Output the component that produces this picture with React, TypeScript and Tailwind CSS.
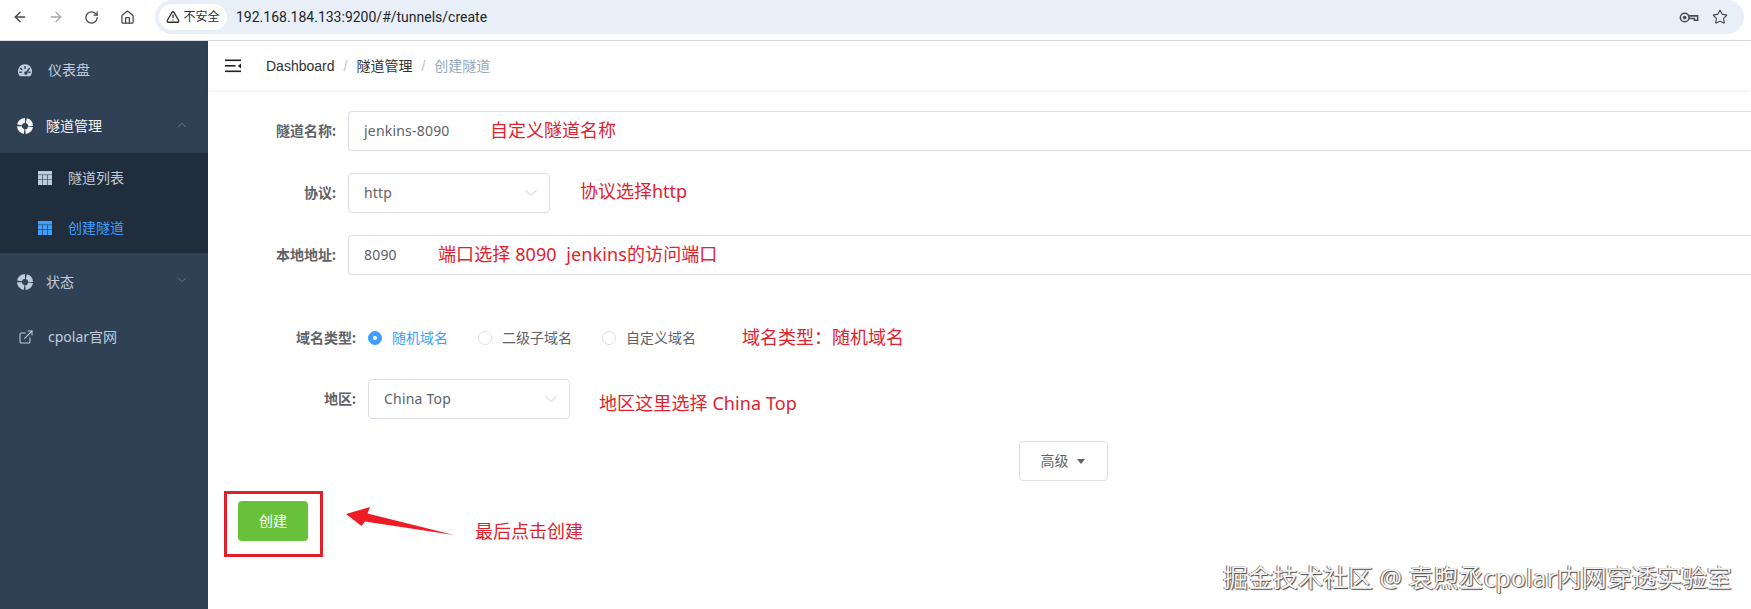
import React from "react";
import { ArrowLeft, ArrowRight, RotateCw, Home, TriangleAlert, Star, ChevronUp, ChevronDown, ExternalLink } from "lucide-react";

const cjk = "font-['Noto_Sans','Noto_Sans_CJK_SC',sans-serif]";
const note = "absolute whitespace-pre text-[18px] leading-[24px] text-[#e1222f] font-['Noto_Sans','Noto_Sans_CJK_SC',sans-serif]";

function Ring({ className }: { className: string }) {
  return (
    <svg viewBox="0 0 16 16" className={className} fill="none" stroke="currentColor">
      <circle cx="8" cy="8" r="5.6" strokeWidth="4.8" strokeDasharray="7.4 1.4" strokeDashoffset="-0.7" />
    </svg>
  );
}

function Grid({ className }: { className: string }) {
  return (
    <svg viewBox="0 0 14 14" className={className} fill="currentColor">
      <rect x="0" y="0" width="14" height="3.6" />
      <rect x="0" y="4.1" width="4.3" height="4.4" />
      <rect x="4.8" y="4.1" width="4.4" height="4.4" />
      <rect x="9.7" y="4.1" width="4.3" height="4.4" />
      <rect x="0" y="9" width="4.3" height="5" />
      <rect x="4.8" y="9" width="4.4" height="5" />
      <rect x="9.7" y="9" width="4.3" height="5" />
    </svg>
  );
}

function Gauge() {
  return (
    <svg viewBox="0 0 16 14" className="h-[13px] w-[14px] text-[#bfcbd9]" fill="currentColor">
      <path fillRule="evenodd" d="M8 0a8 8 0 0 1 6.6 12.6c-.3.4-.7.9-1.3.9H2.7c-.6 0-1-.5-1.3-.9A8 8 0 0 1 8 0Zm-.9 2v3h1.8V2H7.1ZM3.3 3.7 2.1 5l2 2 1.2-1.2-2-2.1Zm9.4 0-3.5 4.4a1.9 1.9 0 1 0 1.5 1L13.8 5l-1.1-1.3ZM1.5 8.2v1.7h2.8V8.2H1.5Zm10.2 0v1.7h2.8V8.2h-2.8Z" />
    </svg>
  );
}

function SelectBox({ value, width }: { value: string; width: string }) {
  return (
    <div className={`flex h-10 items-center justify-between rounded border border-[#dcdfe6] bg-white pl-[15px] pr-[8px] text-sm tracking-[0.2px] text-[#606266] ${width}`}>
      <span>{value}</span>
      <ChevronDown className="h-[20px] w-[20px] text-[#c0c4cc]" strokeWidth={1.1} />
    </div>
  );
}

function Radio({ label, on, width }: { label: string; on?: boolean; width: string }) {
  return (
    <div className={`flex items-center ${width}`}>
      <span className={`mr-[10px] flex h-[14px] w-[14px] items-center justify-center rounded-full border ${on ? "border-[#409eff] bg-[#409eff]" : "border-[#dcdfe6] bg-white"}`}>
        {on && <span className="h-1 w-1 rounded-full bg-white" />}
      </span>
      <span className={`text-sm leading-5 ${on ? "text-[#409eff]" : "text-[#606266]"}`}>{label}</span>
    </div>
  );
}

export default function App() {
  return (
    <div className={`relative flex h-[609px] w-[1751px] flex-col overflow-hidden bg-white ${cjk}`}>
      <div className="flex h-[41px] shrink-0 border-b border-[#d9dcdf] bg-white">
        <div className="flex h-[34px] w-[155px] shrink-0 items-center text-[#474747]">
          <ArrowLeft className="ml-[12px] h-4 w-4" strokeWidth={2} />
          <ArrowRight className="ml-[20px] h-4 w-4 text-[#a8a8a8]" strokeWidth={2} />
          <RotateCw className="ml-[20px] h-[15px] w-[15px]" strokeWidth={2} />
          <Home className="ml-[21px] h-[15px] w-[15px]" strokeWidth={2} />
        </div>
        <div className="flex h-[34px] w-[1589px] items-center rounded-r-[17px] rounded-l-[17px] bg-[#e9eff8] pl-[4px] pr-[16px]">
          <div className="flex h-[26px] w-[68px] items-center justify-center gap-[3px] rounded-full bg-white text-[12px] text-[#2e2e2e]">
            <TriangleAlert className="h-[14px] w-[14px]" strokeWidth={2.2} />
            <span>不安全</span>
          </div>
          <span className="ml-[9px] font-['Roboto',sans-serif] text-[14px] text-[#22262a]">192.168.184.133:9200/#/tunnels/create</span>
          <div className="ml-auto flex items-center gap-[13px] text-[#474c55]">
            <svg viewBox="0 0 18 12" className="h-[13px] w-[20px]" fill="none" stroke="currentColor" strokeWidth="1.4">
              <circle cx="5" cy="6" r="4" />
              <circle cx="5" cy="6" r="1" fill="currentColor" />
              <path d="M9 4.5h8v4h-3v-1.5h-5" />
            </svg>
            <Star className="h-[16px] w-[16px]" strokeWidth={1.7} />
          </div>
        </div>
      </div>

      <div className="flex min-h-0 flex-1">
        <aside className="w-[208px] shrink-0 bg-[#304156] text-sm text-[#bfcbd9]">
          <div className="flex h-[56px] items-center pl-[18px] pt-[2px]">
            <Gauge />
            <span className="ml-[16px]">仪表盘</span>
          </div>
          <div className="flex h-[56px] items-center pl-[17px] pr-[19px] pt-[2px] text-[#f4f4f5]">
            <Ring className="h-4 w-4" />
            <span className="ml-[13px]">隧道管理</span>
            <ChevronUp className="ml-auto mb-[2px] h-[14px] w-[14px] text-[#7f8c9d]" strokeWidth={1.2} />
          </div>
          <div className="bg-[#1f2d3d]">
            <div className="flex h-[50px] items-center pl-[38px]">
              <Grid className="h-[14px] w-[14px]" />
              <span className="ml-[16px]">隧道列表</span>
            </div>
            <div className="flex h-[50px] items-center pl-[38px] text-[#409eff]">
              <Grid className="h-[14px] w-[14px]" />
              <span className="ml-[16px]">创建隧道</span>
            </div>
          </div>
          <div className="flex h-[56px] items-center pl-[17px] pr-[19px] pt-[2px]">
            <Ring className="h-4 w-4" />
            <span className="ml-[13px]">状态</span>
            <ChevronDown className="ml-auto mb-[4px] h-[14px] w-[14px] text-[#7f8c9d]" strokeWidth={1.2} />
          </div>
          <div className="flex h-[56px] items-center pl-[18px]">
            <ExternalLink className="h-4 w-4" strokeWidth={1.6} />
            <span className="ml-[14px]">cpolar官网</span>
          </div>
        </aside>

        <main className="relative min-w-0 flex-1">
          <header className="flex h-[49px] items-center bg-white pl-[17px] shadow-[0_1px_4px_rgba(0,21,41,0.08)]">
            <svg viewBox="0 0 16 14" className="h-[14px] w-[16px] text-[#222]" fill="currentColor">
              <rect x="0" y="0.5" width="16" height="1.6" />
              <rect x="0" y="6" width="10.5" height="1.6" />
              <rect x="0" y="11.5" width="16" height="1.6" />
              <path d="M16 4.4v5l-3.2-2.5Z" />
            </svg>
            <nav className="ml-[25px] flex items-center text-sm font-['Liberation_Sans','Noto_Sans_CJK_SC',sans-serif] text-[#303133]">
              <span>Dashboard</span>
              <span className="mx-[9px] text-[#c0c4cc]">/</span>
              <span>隧道管理</span>
              <span className="mx-[9px] text-[#c0c4cc]">/</span>
              <span className="text-[#97a8be]">创建隧道</span>
            </nav>
          </header>

          <div className="pt-[21px]">
            <div className="flex items-center">
              <label className="mr-3 w-[128px] text-right text-sm font-bold text-[#606266]">隧道名称:</label>
              <div className="relative flex h-10 flex-1 items-center rounded-l border border-r-0 border-[#dcdfe6] pl-[15px] text-sm tracking-[0.2px] text-[#606266]">
                jenkins-8090
                <span className={`${note} left-[141px] top-[6px] tracking-normal`}>自定义隧道名称</span>
              </div>
            </div>

            <div className="mt-[22px] flex items-center">
              <label className="mr-3 w-[128px] text-right text-sm font-bold text-[#606266]">协议:</label>
              <SelectBox value="http" width="w-[202px]" />
              <span className="ml-[30px] mb-[4px] whitespace-pre text-[18px] leading-[24px] text-[#e1222f]">协议选择http</span>
            </div>

            <div className="mt-[22px] flex items-center">
              <label className="mr-3 w-[128px] text-right text-sm font-bold text-[#606266]">本地地址:</label>
              <div className="relative flex h-10 flex-1 items-center rounded-l border border-r-0 border-[#dcdfe6] pl-[15px] text-sm tracking-[0.2px] text-[#606266]">
                8090
                <span className={`${note} left-[89px] top-[6px] tracking-[0.1px]`}>端口选择 8090  jenkins的访问端口</span>
              </div>
            </div>

            <div className="mt-[43px] flex h-10 items-center">
              <label className="mr-3 w-[148px] text-right text-sm font-bold text-[#606266]">域名类型:</label>
              <Radio label="随机域名" on width="w-[110px]" />
              <Radio label="二级子域名" width="w-[124px]" />
              <Radio label="自定义域名" width="w-[124px]" />
              <span className="ml-[16px] mb-[3px] whitespace-pre text-[18px] leading-[24px] text-[#e1222f]">{"域名类型\uFF1A随机域名"}</span>
            </div>

            <div className="mt-[21px] flex items-center">
              <label className="mr-3 w-[148px] text-right text-sm font-bold text-[#606266]">地区:</label>
              <SelectBox value="China Top" width="w-[202px]" />
              <span className="ml-[29px] mt-[8px] whitespace-pre text-[18px] leading-[24px] tracking-[0.1px] text-[#e1222f]">地区这里选择 China Top</span>
            </div>

            <div className="ml-[811px] mt-[22px] flex h-10 w-[89px] items-center justify-center gap-[8px] rounded border border-[#dcdfe6] bg-white pr-[2px] text-sm text-[#606266]">
              <span>高级</span>
              <span className="h-0 w-0 border-x-[4px] border-t-[5px] border-x-transparent border-t-[#606266]" />
            </div>

            <div className="ml-[30px] mt-[20px] flex h-10 w-[70px] items-center justify-center rounded bg-[#67c23a] text-sm text-white">创建</div>
          </div>

          <div className="absolute left-[16px] top-[450px] h-[66px] w-[99px] border-[3px] border-[#e01f2b]" />
          <svg viewBox="0 0 120 40" className="absolute left-[136px] top-[463px] h-[40px] w-[120px]">
            <path d="M2 10 L26 3 L23.5 9.5 L110 31 L21 17.5 L17.5 22 Z" fill="#ee1c25" />
          </svg>
          <span className={`${note} left-[267px] top-[478px]`}>最后点击创建</span>
          <span className="absolute left-[1015px] top-[520px] whitespace-pre text-[25px] leading-[32px] text-[#f4f4f4] [text-shadow:1px_1px_1px_#444,-1px_0_0_#777]">掘金技术社区 @ 袁煦丞cpolar内网穿透实验室</span>
        </main>
      </div>
    </div>
  );
}
